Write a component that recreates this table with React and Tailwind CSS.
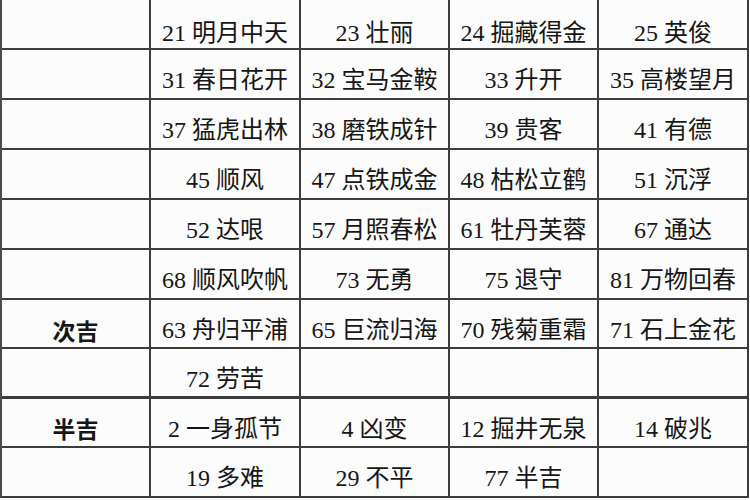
import React from "react";

const rows = [
  { h: "h-[50px]", pt: "pt-[18px]", cells: ["", "21 明月中天", "23 壮丽", "24 掘藏得金", "25 英俊"] },
  { h: "h-[50px]", pt: "pt-[11px]", cells: ["", "31 春日花开", "32 宝马金鞍", "33 升开", "35 高楼望月"] },
  { h: "h-[50px]", pt: "pt-[12px]", cells: ["", "37 猛虎出林", "38 磨铁成针", "39 贵客", "41 有德"] },
  { h: "h-[50px]", pt: "pt-[12px]", cells: ["", "45 顺风", "47 点铁成金", "48 枯松立鹤", "51 沉浮"] },
  { h: "h-[50px]", pt: "pt-[12px]", cells: ["", "52 达哏", "57 月照春松", "61 牡丹芙蓉", "67 通达"] },
  { h: "h-[50px]", pt: "pt-[12px]", cells: ["", "68 顺风吹帆", "73 无勇", "75 退守", "81 万物回春"] },
  { h: "h-[49px]", pt: "pt-[13px]", cells: ["次吉", "63 舟归平浦", "65 巨流归海", "70 残菊重霜", "71 石上金花"] },
  { h: "h-[50px]", pt: "pt-[12px]", thick: true, cells: ["", "72 劳苦", "", "", ""] },
  { h: "h-[49px]", pt: "pt-[12px]", cells: ["半吉", "2 一身孤节", "4 凶变", "12 掘井无泉", "14 破兆"] },
  { h: "h-[50px]", pt: "pt-[12px]", cells: ["", "19 多难", "29 不平", "77 半吉", ""] },
];

const widths = ["w-[149px]", "w-[150px]", "w-[149px]", "w-[149px]", "w-[150px]"];

export default function App() {
  return (
    <div
      className="w-[750px] h-[500px] bg-[#fcfcfc] overflow-hidden text-[#161616]"
      style={{ fontFamily: '"Liberation Serif", "Noto Sans CJK SC", serif' }}
    >
      <div className="flex flex-col border-l-2 border-[#4a4a4a] w-[749px]">
        {rows.map((r, i) => (
          <div
            key={i}
            className={`flex ${r.h} ${r.thick ? "border-b-[3px]" : "border-b-2"} border-[#3c3c3c] box-border`}
          >
            {r.cells.map((c, j) => (
              <div
                key={j}
                className={`${widths[j]} shrink-0 flex justify-center items-center ${r.pt} border-r-2 border-[#3c3c3c] box-border leading-none whitespace-nowrap`}
              >
                {j === 0 ? (
                  <span
                    className="text-[23px] font-bold"
                    style={{ fontFamily: '"Noto Sans CJK SC", sans-serif' }}
                  >
                    {c}
                  </span>
                ) : (
                  <span className="text-[24px]">{c}</span>
                )}
              </div>
            ))}
          </div>
        ))}
      </div>
    </div>
  );
}
